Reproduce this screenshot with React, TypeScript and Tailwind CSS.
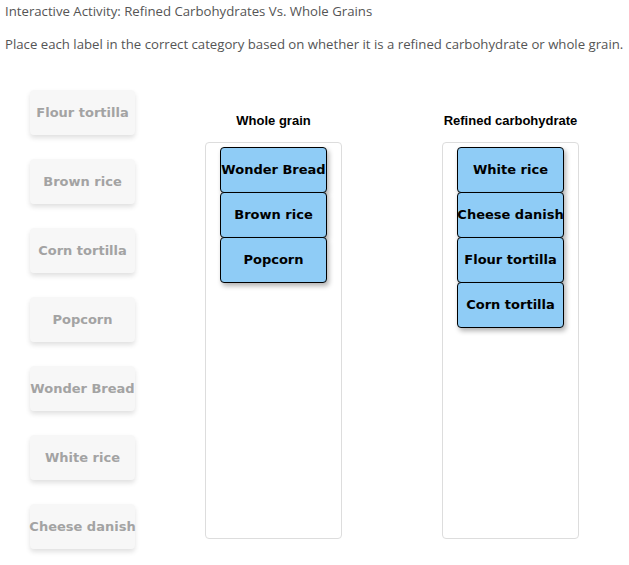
import React from "react";

const pool = [
  "Flour tortilla",
  "Brown rice",
  "Corn tortilla",
  "Popcorn",
  "Wonder Bread",
  "White rice",
  "Cheese danish",
];

const columns = [
  { title: "Whole grain", items: ["Wonder Bread", "Brown rice", "Popcorn"] },
  {
    title: "Refined carbohydrate",
    items: ["White rice", "Cheese danish", "Flour tortilla", "Corn tortilla"],
  },
];

const labelFont = { fontFamily: '"DejaVu Sans", Verdana, sans-serif' };

export default function App() {
  return (
    <div className="w-[629px] h-[565px] bg-white relative overflow-hidden">
      <div
        className="pl-[5px] pt-[2px] text-[13.2px] leading-[18px] text-[#555]"
        style={{ fontFamily: '"Open Sans", sans-serif' }}
      >
        <p>Interactive Activity: Refined Carbohydrates Vs. Whole Grains</p>
        <p className="mt-[15px]">
          Place each label in the correct category based on whether it is a refined carbohydrate or whole grain.
        </p>
      </div>

      <div className="flex mt-[37px] pl-[30px]">
        <div className="flex flex-col gap-[24px] w-[105px]">
          {pool.map((p) => (
            <div
              key={p}
              className="h-[45px] w-[105px] rounded-[4px] bg-[#f7f7f7] shadow-[0_3px_5px_rgba(0,0,0,0.12)] flex items-center justify-center text-[13px] font-bold text-[#a3a3a3] whitespace-nowrap"
              style={labelFont}
            >
              {p}
            </div>
          ))}
        </div>

        <div className="flex gap-[100px] ml-[70px]">
          {columns.map((c) => (
            <div key={c.title} className="flex flex-col w-[137px] pt-[23px]">
              <div
                className="text-center text-[13px] leading-[16px] font-bold text-black whitespace-nowrap mb-[13px]"
                style={{ fontFamily: '"Liberation Sans", Arial, sans-serif' }}
              >
                {c.title}
              </div>
              <div className="h-[397px] border border-[#ddd] rounded-[4px] pt-[4px] flex flex-col items-center">
                {c.items.map((it, i) => (
                  <div
                    key={it}
                    className={`h-[46px] w-[107px] bg-[#8fccf6] border border-black rounded-[4px] shadow-[2px_3px_5px_rgba(0,0,0,0.3)] flex items-center justify-center text-[13px] font-bold text-black whitespace-nowrap ${i > 0 ? "-mt-px" : ""}`}
                    style={labelFont}
                  >
                    {it}
                  </div>
                ))}
              </div>
            </div>
          ))}
        </div>
      </div>
    </div>
  );
}
